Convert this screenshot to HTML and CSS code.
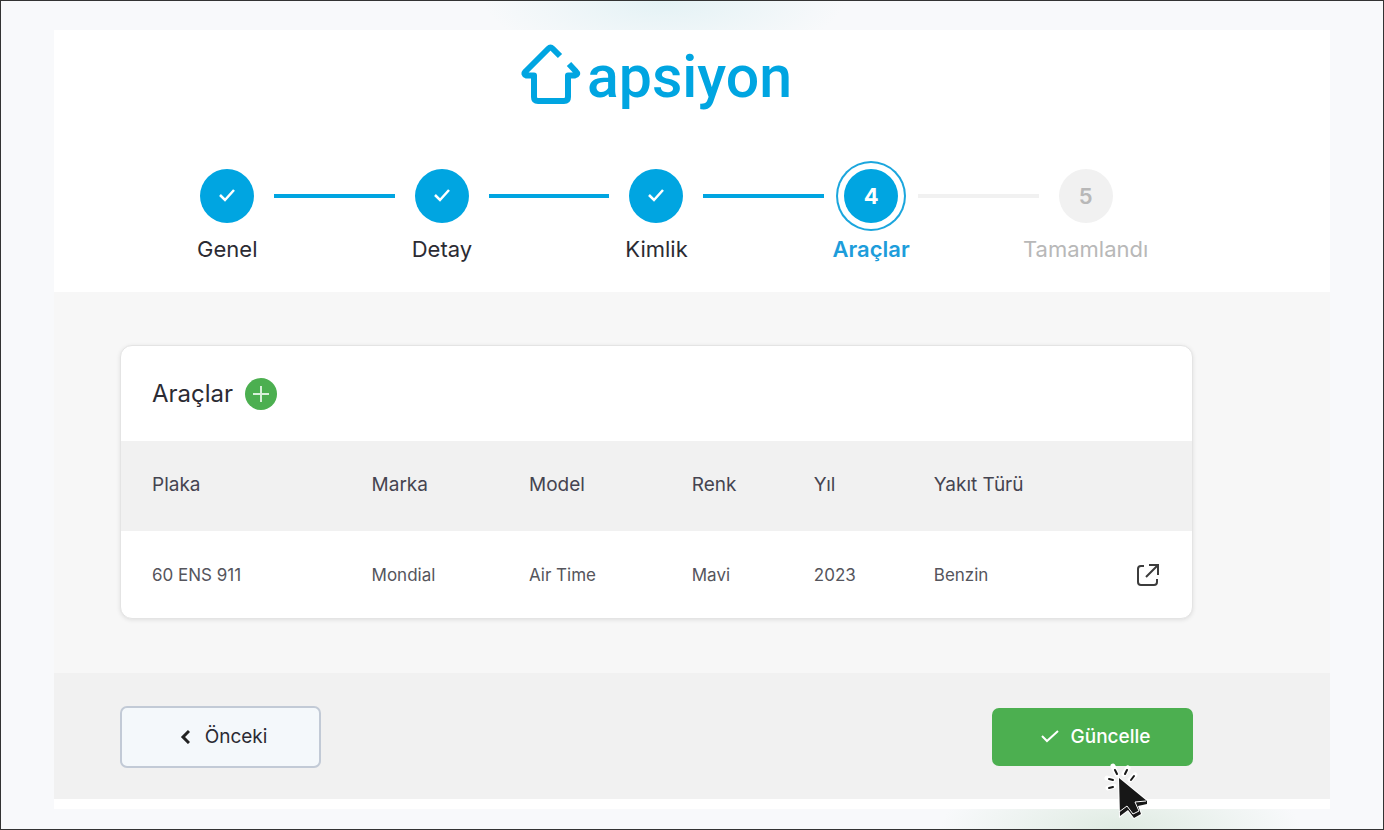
FILE: index.html
```html
<!DOCTYPE html>
<html lang="tr">
<head>
<meta charset="utf-8">
<meta name="viewport" content="width=device-width, initial-scale=1">
<title>apsiyon - Araçlar</title>
<link rel="stylesheet" href="styles.css">
</head>
<body>
<div class="page">
  <main class="panel">
    <header class="top">
      <div class="logo">
        <svg class="logo-mark" viewBox="0 0 60 62" fill="none" stroke="currentColor" stroke-width="6" stroke-linejoin="round" aria-hidden="true">
          <path d="M39 13 31.500 5.500Q29.500 3.500 27.500 5.500L4.500 28.500Q2 31.500 5.500 32.500H13V54Q13 58 17 58H43Q47 58 47 54V32.500H53.500Q58 31.500 55 28.500L48 21"/>
        </svg>
        <span class="logo-text">apsiyon</span>
      </div>
      <ol class="steps">
        <li class="step done">
          <div class="track"><span class="dot"><svg class="tick" viewBox="0 0 18 14" aria-hidden="true"><path d="M2 7 7 12 16 2"/></svg></span><span class="line"></span></div>
          <span class="label">Genel</span>
        </li>
        <li class="step done">
          <div class="track"><span class="dot"><svg class="tick" viewBox="0 0 18 14" aria-hidden="true"><path d="M2 7 7 12 16 2"/></svg></span><span class="line"></span></div>
          <span class="label">Detay</span>
        </li>
        <li class="step done">
          <div class="track"><span class="dot"><svg class="tick" viewBox="0 0 18 14" aria-hidden="true"><path d="M2 7 7 12 16 2"/></svg></span><span class="line"></span></div>
          <span class="label">Kimlik</span>
        </li>
        <li class="step current" aria-current="step">
          <div class="track"><span class="dot">4</span><span class="line"></span></div>
          <span class="label">Araçlar</span>
        </li>
        <li class="step">
          <div class="track"><span class="dot">5</span></div>
          <span class="label">Tamamlandı</span>
        </li>
      </ol>
    </header>

    <section class="content">
      <div class="card">
        <div class="card-head">
          <h1 class="card-title">Araçlar</h1>
          <button class="add" type="button" aria-label="Araç ekle">
            <svg class="plus" viewBox="0 0 18 18" aria-hidden="true"><path d="M9 1V17M1 9H17"/></svg>
          </button>
        </div>
        <table class="vehicles">
          <colgroup><col class="c-plate"><col class="c-brand"><col class="c-model"><col class="c-color"><col class="c-year"><col></colgroup>
          <thead>
            <tr><th scope="col">Plaka</th><th scope="col">Marka</th><th scope="col">Model</th><th scope="col">Renk</th><th scope="col">Yıl</th><th scope="col">Yakıt Türü</th></tr>
          </thead>
          <tbody>
            <tr>
              <td>60 ENS 911</td><td>Mondial</td><td>Air Time</td><td>Mavi</td><td>2023</td>
              <td>
                <div class="last">
                  <span>Benzin</span>
                  <button class="open" type="button" aria-label="Aracı aç">
                    <svg class="open-icon" viewBox="0 0 24 24" aria-hidden="true"><path d="M8 3H5Q2 3 2 6V19Q2 22 5 22H18Q21 22 21 19V16M13 2H22V12M22 2 10 14"/></svg>
                  </button>
                </div>
              </td>
            </tr>
          </tbody>
        </table>
      </div>
    </section>

    <footer class="actions">
      <button class="btn back" type="button">
        <svg class="chevron" viewBox="0 0 10 16" aria-hidden="true"><path d="M9 3 3 9 9 15"/></svg>
        Önceki
      </button>
      <button class="btn save" type="button">
        <svg class="save-tick" viewBox="0 0 18 14" aria-hidden="true"><path d="M1 7 6 12 17 2"/></svg>
        Güncelle
        <svg class="pointer" viewBox="0 0 46 58" aria-hidden="true">
          <path class="spark-halo" d="M9 3 13 12M24 5 20 11M31 12 26 17M3 15 9 17M4 25 10 23"/>
          <path class="arrow" d="M15 15 43 38V41L34 43 37 51 30 55 24 47 16 53Z"/>
          <path class="seam" d="M15 49 23 43 29 51 35 48 31 39 42 38"/>
          <path class="spark" d="M11 7 13 11M23 7 21 11M30 13 27 17M5 16 9 17M5 25 9 24"/>
        </svg>
      </button>
    </footer>
  </main>
</div>
</body>
</html>
```
FILE: styles.css
```css
* {
  box-sizing: border-box;
}

body {
  margin: 0;
  font-family: Inter, "Liberation Sans", sans-serif;
  color: #2b2b33;
}

button {
  font: inherit;
  cursor: pointer;
}

svg {
  display: block;
}

.page {
  min-height: 100vh;
  padding: 29px 53px 20px;
  border: 1px solid #333;
  background:
    radial-gradient(ellipse 180px 60px at 48% 0, #e4f2f5, transparent),
    radial-gradient(ellipse 180px 60px at 81% 100%, #dfebe2, transparent),
    #f8f9fb;
}

.panel {
  padding-bottom: 10px;
  background: #fff;
}

.top,
.content,
.actions {
  padding-left: 66px;
  padding-right: 137px;
}

/* Logo and stepper */
.top {
  padding-top: 8px;
  padding-bottom: 29px;
}

.logo {
  display: flex;
  justify-content: center;
  align-items: center;
  gap: 6px;
  height: 80px;
  color: #00a5e1;
}

.logo-mark {
  width: 60px;
  height: 62px;
  margin-bottom: 8px;
}

.logo-text {
  margin-bottom: 3px;
  font-family: Roboto, Inter, sans-serif;
  font-size: 59px;
  line-height: 72px;
  font-weight: 500;
}

.steps {
  display: grid;
  grid-template-columns: repeat(5, 1fr);
  margin: 51px 0 0;
  padding: 0;
  list-style: none;
}

.step {
  display: flex;
  flex-direction: column;
  gap: 12px;
  color: #b8b8b8;
}

.track {
  display: flex;
  align-items: center;
}

.dot {
  display: grid;
  place-items: center;
  flex: none;
  width: 54px;
  height: 54px;
  margin-left: calc(50% - 27px);
  border-radius: 50%;
  background: #f1f1f1;
  font-size: 22px;
  font-weight: 600;
}

.line {
  flex: 1;
  height: 4px;
  margin-left: 20px;
  margin-right: calc(47px - 50%);
  background: #f1f1f1;
}

.label {
  font-size: 22px;
  line-height: 28px;
  text-align: center;
}

.done {
  color: #2b2b33;
}

.done .dot,
.done .line,
.current .dot {
  background: #00a5e1;
}

.current {
  color: #1d9ddb;
  font-weight: 600;
}

.current .dot {
  color: #fff;
  font-weight: 700;
  box-shadow: 0 0 0 6px #fff, 0 0 0 8px #1ba6dd;
}

.tick {
  width: 18px;
  height: 14px;
  margin-bottom: 2px;
  fill: none;
  stroke: #fff;
  stroke-width: 2.5;
}

/* Vehicle card */
.content {
  padding-top: 53px;
  padding-bottom: 54px;
  background: #f7f7f7;
}

.card {
  overflow: hidden;
  border: 1px solid #e4e4e4;
  border-radius: 12px;
  background: #fff;
  box-shadow: 0 1px 4px #0000001a;
}

.card-head {
  display: flex;
  align-items: center;
  gap: 12px;
  height: 95px;
  padding: 0 31px;
}

.card-title {
  margin: 0;
  font-size: 24px;
  line-height: 30px;
  font-weight: 400;
}

.add {
  display: grid;
  place-items: center;
  width: 32px;
  height: 32px;
  padding: 0;
  border: 0;
  border-radius: 50%;
  background: #4caf50;
}

.plus {
  width: 18px;
  height: 18px;
  fill: none;
  stroke: #d8f0d9;
  stroke-width: 2;
}

.vehicles {
  width: 100%;
  border-collapse: collapse;
  table-layout: fixed;
  text-align: left;
}

.c-plate {
  width: 20.5%;
}

.c-brand {
  width: 14.7%;
}

.c-model {
  width: 15.2%;
}

.c-color {
  width: 11.4%;
}

.c-year {
  width: 11.2%;
}

.vehicles th,
.vehicles td {
  padding: 0 0 0 31px;
}

.vehicles th {
  height: 90px;
  padding-bottom: 3px;
  background: #f1f1f1;
  color: #454450;
  font-size: 19px;
  font-weight: 400;
}

.vehicles td {
  height: 87px;
  color: #55555c;
  font-size: 17px;
}

.last {
  display: flex;
  justify-content: space-between;
  align-items: center;
  padding-right: 32px;
}

.open {
  padding: 0;
  border: 0;
  background: none;
}

.open-icon {
  width: 24px;
  height: 24px;
  fill: none;
  stroke: #3c3c3c;
  stroke-width: 2;
}

/* Bottom buttons */
.actions {
  display: flex;
  justify-content: space-between;
  align-items: center;
  padding-top: 33px;
  padding-bottom: 31px;
  background: #f1f1f1;
}

.btn {
  display: flex;
  justify-content: center;
  align-items: center;
  width: 201px;
  padding: 0 0 2px 6px;
  border-radius: 7px;
  font-size: 19px;
}

.back {
  gap: 15px;
  height: 62px;
  border: 2px solid #c2cad6;
  background: #f4f8fb;
  color: #2b2b33;
}

.chevron {
  width: 10px;
  height: 16px;
  fill: none;
  stroke: #222;
  stroke-width: 3;
}

.save {
  position: relative;
  gap: 12px;
  height: 58px;
  border: 0;
  background: #4caf50;
  color: #fff;
  font-weight: 500;
}

.save-tick {
  width: 18px;
  height: 14px;
  fill: none;
  stroke: #fff;
  stroke-width: 2;
}

.pointer {
  position: absolute;
  top: 55px;
  right: 43px;
  width: 46px;
  height: 58px;
  overflow: visible;
}

.arrow {
  fill: #171717;
  stroke: #fff;
  stroke-width: 2;
  paint-order: stroke;
}

.seam {
  fill: none;
  stroke: #fff;
  stroke-width: 1;
}

.spark,
.spark-halo {
  fill: none;
  stroke: #171717;
  stroke-width: 2;
  stroke-linecap: round;
}

.spark-halo {
  stroke: #fff;
  stroke-width: 5;
}
```
